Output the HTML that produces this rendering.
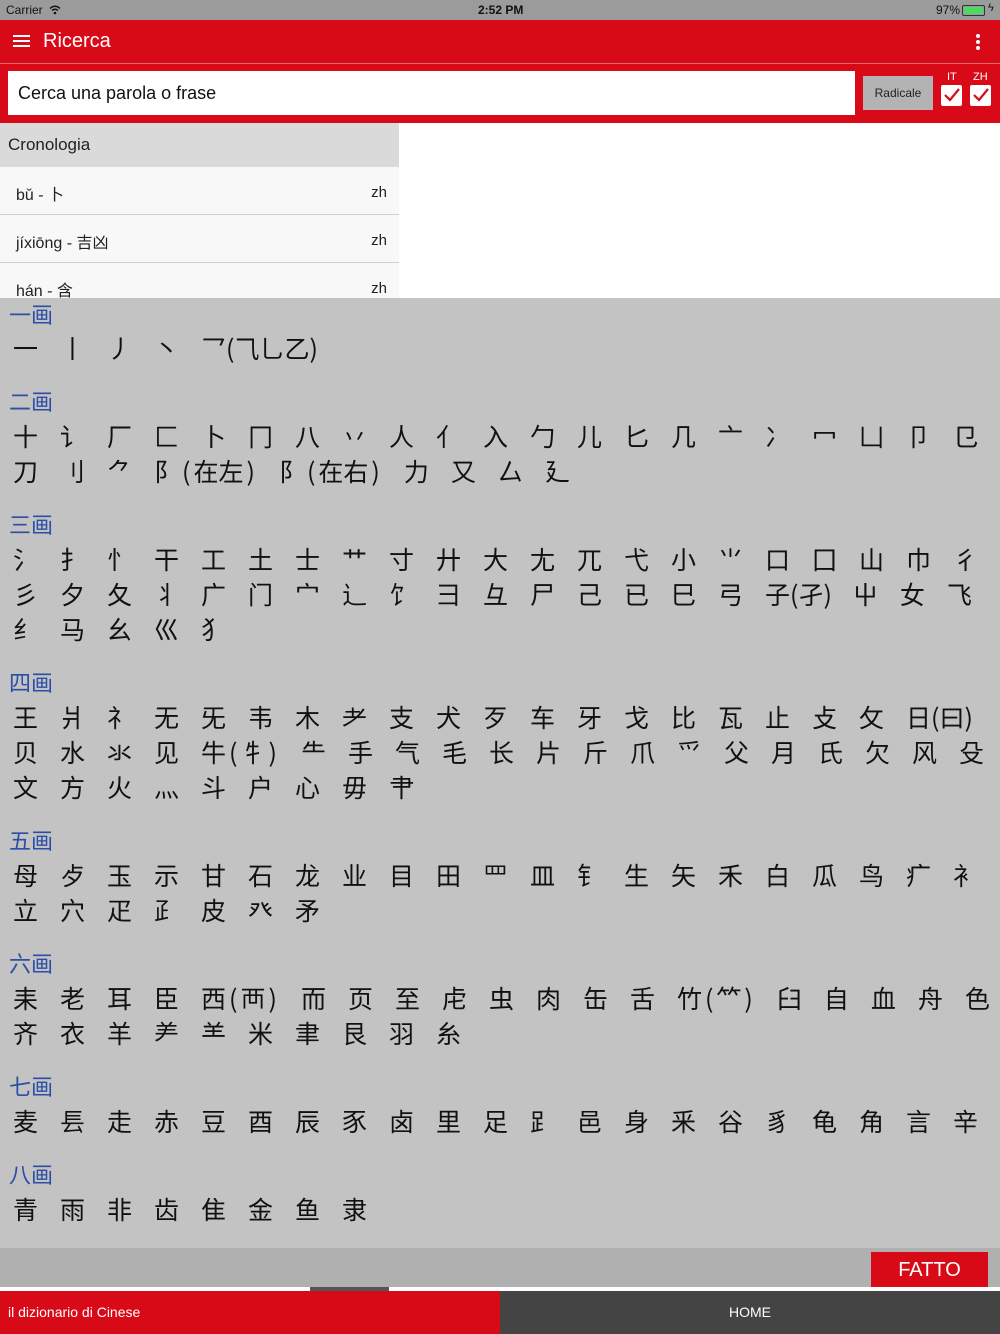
<!DOCTYPE html>
<html><head><meta charset="utf-8"><style>
*{margin:0;padding:0;box-sizing:border-box}
body{width:1000px;height:1334px;position:relative;overflow:hidden;background:#fff;font-family:"Liberation Sans","Noto Sans CJK SC",sans-serif}
.abs{position:absolute}
.status{left:0;top:0;width:1000px;height:20px;background:#9b9b9b;font-size:12px;color:#111}
.hdr{left:0;top:20px;width:1000px;height:43px;background:#d90a17}
.line{left:0;top:63px;width:1000px;height:1px;background:#e46a70}
.search{left:0;top:64px;width:1000px;height:59px;background:#d90a17}
.rows{left:0;top:298px;width:1000px;height:950px;background:#c3c3c3}
.h{position:absolute;left:9px;font-size:22px;color:#2c4ea6;font-family:"Noto Sans CJK SC",sans-serif;line-height:28px}
.r{position:absolute;left:13px;font-size:25px;line-height:34px;white-space:nowrap;color:#111;font-family:"Noto Sans CJK SC",sans-serif}
.r span{display:inline-block;min-width:26px;margin-right:21px}
.r i{font-style:normal;margin:0 3px}
.hist{left:0;top:123px;width:399px;height:175px;overflow:hidden}
.item{height:48px;background:#f8f8f8;border-bottom:1px solid #cfcfcf;position:relative;font-size:16px;color:#222}
.item .a{position:absolute;left:16px;top:14px;font-family:"Liberation Sans","Noto Sans CJK SC",sans-serif}
.item .b{position:absolute;right:12px;top:17px;font-size:15px}
.cb{width:21px;height:21px;background:#fff;border-radius:2px}
</style></head><body>
<div class="abs status">
 <span class="abs" style="left:6px;top:3px">Carrier</span>
 <svg class="abs" style="left:49px;top:5px" width="12" height="10" viewBox="0 0 12 10"><path d="M1 3.5Q6 -1 11 3.5M3 5.5Q6 3 9 5.5" stroke="#111" stroke-width="1.5" fill="none"/><circle cx="6" cy="8" r="1.3" fill="#111"/></svg>
 <span class="abs" style="left:478px;top:3px;font-weight:bold">2:52 PM</span>
 <span class="abs" style="left:936px;top:3px">97%</span>
 <div class="abs" style="left:962px;top:5px;width:23px;height:11px;border:1px solid #333;border-radius:2px;padding:1px"><div style="width:19px;height:7px;background:#4cd964"></div></div>
 <span class="abs" style="left:988px;top:2px;font-size:11px">ϟ</span>
</div>
<div class="abs hdr">
 <div class="abs" style="left:13px;top:15px;width:17px;height:2px;background:#fff;box-shadow:0 5px 0 #fff,0 10px 0 #fff"></div>
 <span class="abs" style="left:43px;top:10px;color:#fff;font-size:20px">Ricerca</span>
 <div class="abs" style="left:976px;top:14px;width:4px;height:4px;background:#fff;border-radius:2px;box-shadow:0 6px 0 #fff,0 12px 0 #fff"></div>
</div>
<div class="abs line"></div>
<div class="abs search">
 <div class="abs" style="left:8px;top:7px;width:847px;height:44px;background:#fff"></div>
 <span class="abs" style="left:18px;top:19px;font-size:18px;color:#111">Cerca una parola o frase</span>
 <div class="abs" style="left:863px;top:12px;width:70px;height:34px;background:#b3b3b3;font-size:12px;color:#222;text-align:center;line-height:34px">Radicale</div>
 <span class="abs" style="left:947px;top:7px;color:#fff;font-size:11px">IT</span>
 <span class="abs" style="left:973px;top:7px;color:#fff;font-size:11px">ZH</span>
 <div class="abs cb" style="left:941px;top:21px"><svg width="21" height="21"><path d="M4 10l5 5 9-11" stroke="#d90a17" stroke-width="2.2" fill="none"/></svg></div>
 <div class="abs cb" style="left:970px;top:21px"><svg width="21" height="21"><path d="M4 10l5 5 9-11" stroke="#d90a17" stroke-width="2.2" fill="none"/></svg></div>
</div>
<div class="abs hist">
 <div style="height:44px;background:#dadada;font-size:17px;color:#222;padding:12px 8px">Cronologia</div>
 <div class="item"><span class="a">bǔ - 卜</span><span class="b">zh</span></div>
 <div class="item"><span class="a">jíxiōng - 吉凶</span><span class="b">zh</span></div>
 <div class="item"><span class="a">hán - 含</span><span class="b">zh</span></div>
</div>
<div class="abs rows">
<div class="h" style="top:2px">一画</div>
<div class="r" style="top:33px"><span>一</span><span>丨</span><span>丿</span><span>丶</span><span>乛(⺄乚乙)</span></div>
<div class="h" style="top:89px">二画</div>
<div class="r" style="top:121px"><span>十</span><span>讠</span><span>厂</span><span>匚</span><span>卜</span><span>冂</span><span>八</span><span>丷</span><span>人</span><span>亻</span><span>入</span><span>勹</span><span>儿</span><span>匕</span><span>几</span><span>亠</span><span>冫</span><span>冖</span><span>凵</span><span>卩</span><span>㔾</span></div>
<div class="r" style="top:156px"><span>刀</span><span>刂</span><span>⺈</span><span>阝<i>(</i>在左<i>)</i></span><span>阝<i>(</i>在右<i>)</i></span><span>力</span><span>又</span><span>厶</span><span>廴</span></div>
<div class="h" style="top:212px">三画</div>
<div class="r" style="top:244px"><span>氵</span><span>扌</span><span>忄</span><span>干</span><span>工</span><span>土</span><span>士</span><span>艹</span><span>寸</span><span>廾</span><span>大</span><span>尢</span><span>兀</span><span>弋</span><span>小</span><span>⺌</span><span>口</span><span>囗</span><span>山</span><span>巾</span><span>彳</span></div>
<div class="r" style="top:279px"><span>彡</span><span>夕</span><span>夂</span><span>丬</span><span>广</span><span>门</span><span>宀</span><span>辶</span><span>饣</span><span>彐</span><span>彑</span><span>尸</span><span>己</span><span>已</span><span>巳</span><span>弓</span><span>子(孑)</span><span>屮</span><span>女</span><span>飞</span></div>
<div class="r" style="top:314px"><span>纟</span><span>马</span><span>幺</span><span>巛</span><span>犭</span></div>
<div class="h" style="top:370px">四画</div>
<div class="r" style="top:402px"><span>王</span><span>爿</span><span>礻</span><span>无</span><span>旡</span><span>韦</span><span>木</span><span>耂</span><span>支</span><span>犬</span><span>歹</span><span>车</span><span>牙</span><span>戈</span><span>比</span><span>瓦</span><span>止</span><span>攴</span><span>攵</span><span>日(曰)</span></div>
<div class="r" style="top:437px"><span>贝</span><span>水</span><span>氺</span><span>见</span><span>牛<i>(</i>牜<i>)</i></span><span>⺧</span><span>手</span><span>气</span><span>毛</span><span>长</span><span>片</span><span>斤</span><span>爪</span><span>⺤</span><span>父</span><span>月</span><span>氏</span><span>欠</span><span>风</span><span>殳</span></div>
<div class="r" style="top:472px"><span>文</span><span>方</span><span>火</span><span>灬</span><span>斗</span><span>户</span><span>心</span><span>毋</span><span>肀</span></div>
<div class="h" style="top:528px">五画</div>
<div class="r" style="top:560px"><span>母</span><span>歺</span><span>玉</span><span>示</span><span>甘</span><span>石</span><span>龙</span><span>业</span><span>目</span><span>田</span><span>罒</span><span>皿</span><span>钅</span><span>生</span><span>矢</span><span>禾</span><span>白</span><span>瓜</span><span>鸟</span><span>疒</span><span>衤</span></div>
<div class="r" style="top:595px"><span>立</span><span>穴</span><span>疋</span><span>⺪</span><span>皮</span><span>癶</span><span>矛</span></div>
<div class="h" style="top:651px">六画</div>
<div class="r" style="top:683px"><span>耒</span><span>老</span><span>耳</span><span>臣</span><span>西<i>(</i>襾<i>)</i></span><span>而</span><span>页</span><span>至</span><span>虍</span><span>虫</span><span>肉</span><span>缶</span><span>舌</span><span>竹<i>(</i>⺮<i>)</i></span><span>臼</span><span>自</span><span>血</span><span>舟</span><span>色</span></div>
<div class="r" style="top:718px"><span>齐</span><span>衣</span><span>羊</span><span>⺶</span><span>⺷</span><span>米</span><span>聿</span><span>艮</span><span>羽</span><span>糸</span></div>
<div class="h" style="top:774px">七画</div>
<div class="r" style="top:806px"><span>麦</span><span>镸</span><span>走</span><span>赤</span><span>豆</span><span>酉</span><span>辰</span><span>豕</span><span>卤</span><span>里</span><span>足</span><span>⻊</span><span>邑</span><span>身</span><span>釆</span><span>谷</span><span>豸</span><span>龟</span><span>角</span><span>言</span><span>辛</span></div>
<div class="h" style="top:862px">八画</div>
<div class="r" style="top:894px"><span>青</span><span>雨</span><span>非</span><span>齿</span><span>隹</span><span>金</span><span>鱼</span><span>隶</span></div>
</div>
<div class="abs" style="left:0;top:1248px;width:1000px;height:39px;background:#b0b0b0"></div>
<div class="abs" style="left:871px;top:1252px;width:117px;height:35px;background:#d90a17;color:#fff;font-size:20px;text-align:center;line-height:36px">FATTO</div>
<div class="abs" style="left:0;top:1287px;width:1000px;height:4px;background:#fff"></div>
<div class="abs" style="left:310px;top:1287px;width:79px;height:4px;background:#555"></div>
<div class="abs" style="left:0;top:1291px;width:500px;height:43px;background:#d90a17;color:#fff;font-size:14px;padding:13px 8px">il dizionario di Cinese</div>
<div class="abs" style="left:500px;top:1291px;width:500px;height:43px;background:#444;color:#fff;font-size:14px;text-align:center;line-height:43px">HOME</div>
</body></html>
